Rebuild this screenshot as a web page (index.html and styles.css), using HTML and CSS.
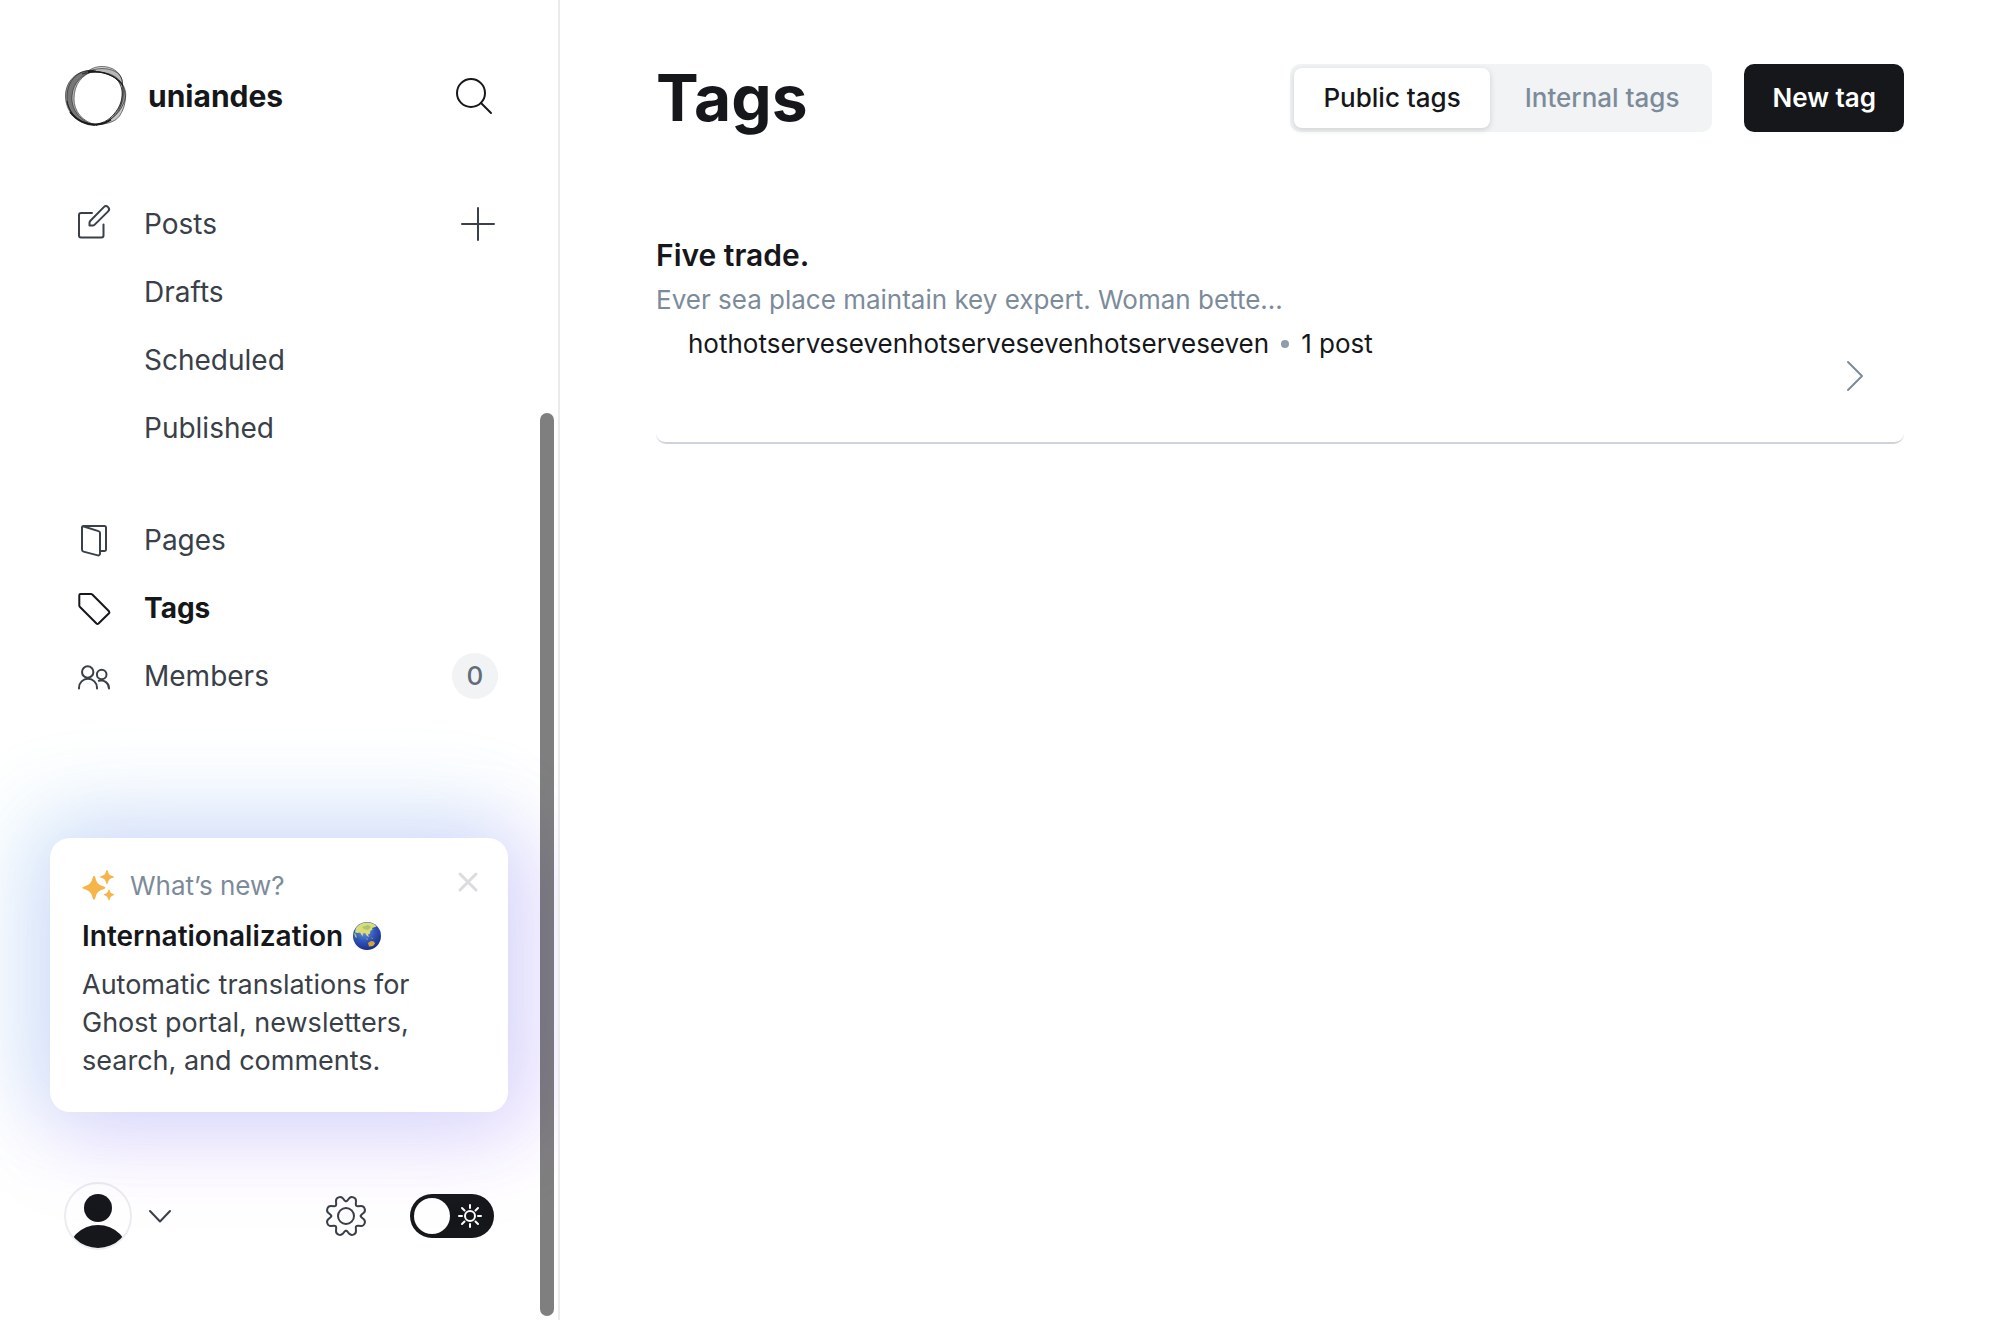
FILE: index.html
```html
<!DOCTYPE html>
<html lang="en">
<head>
<meta charset="utf-8">
<meta name="viewport" content="width=device-width, initial-scale=1">
<title>Tags</title>
<link rel="stylesheet" href="styles.css">
</head>
<body>
<div class="app">
  <aside class="sidebar">
    <div class="site">
      <svg class="site-logo" viewBox="0 0 64 64" aria-hidden="true">
        <g fill="#222" stroke="#222" stroke-width=".6" stroke-linejoin="round">
          <path fill-opacity=".45" d="M32 7C16 4 2 15 1.500 31 1 48 14 61 31 61.500 18 58 7 47 8 32 9 18 19 9 32 7z"/>
          <path fill-opacity=".3" d="M30 6.500C15 5 3 16 3 33c0 17 13 28 30 28C18 58 10 47 10 35 10 20 18 11 30 6.500z"/>
          <path fill-opacity=".2" d="M18 10c7-3 10-7 19-7.500 12-.5 22 7 21.500 18.500C54 12 46 9 36 8.500c-6-.3-12 0-18 1.500z"/>
          <path fill-opacity=".15" d="M24 7.500C32 4 44 3 52 8c5 3 7 8 6.500 14C53 13 44 9 34 8z"/>
          <path fill-opacity=".3" d="M58.300 20c4 6 4.500 13 1.500 19-3 7-7 12-13 16-5 4-10 6-15 6 12-2 20-8 24-17 3-8 3-16 2.500-24z"/>
          <path fill-opacity=".25" d="M58.500 21c2 8 1 16-3 22-5 8-9 16-24 18 9-1 19-2 24-9 6-9 8-20 3-31z"/>
        </g>
        <g fill="none" stroke="#1a1a1a" stroke-width=".9">
          <path d="M24 7.500c12-1 23 2 29 8 8 9 6 23-1 32-5 7-12 12-20 12.500C17 61 5 50 3 37"/>
          <path stroke-width="1.600" d="M6 48c6 8 16 13 26 12.500 6-.3 11-2 15-5"/>
          <path stroke-width="1.200" d="M24 8.500c9-2 18 .5 25 4 5 3 8 5 9.500 9"/>
        </g>
      </svg>
      <span class="site-name">uniandes</span>
      <button class="icon-button search" type="button" aria-label="Search">
        <svg width="36" height="36" viewBox="0 0 36 36"><circle cx="15" cy="15" r="14"/><path d="m25 25 10 10"/></svg>
      </button>
    </div>

    <nav class="nav" aria-label="Main">
      <ul class="nav-group">
        <li class="nav-row">
          <a class="nav-link" href="#posts">
            <svg class="nav-icon" viewBox="0 0 32 32"><path d="M14 5H3a2 2 0 0 0-2 2v20.500a2 2 0 0 0 2 2h20.500a2 2 0 0 0 2-2V16.500"/><path d="M11.500 17.500v-2.700a3 3 0 0 1 .9-2.100L25.800-.9a3 3 0 0 1 4.300 4.300L16.700 16.600a3 3 0 0 1-2.100.9z"/></svg>
            Posts
          </a>
          <button class="icon-button add" type="button" aria-label="New post">
            <svg width="34" height="34" viewBox="0 0 34 34"><path d="M17 1v32M1 17h32"/></svg>
          </button>
        </li>
        <li class="nav-row"><a class="nav-link nested" href="#drafts">Drafts</a></li>
        <li class="nav-row"><a class="nav-link nested" href="#scheduled">Scheduled</a></li>
        <li class="nav-row"><a class="nav-link nested" href="#published">Published</a></li>
      </ul>
      <ul class="nav-group">
        <li class="nav-row">
          <a class="nav-link" href="#pages">
            <svg class="nav-icon" viewBox="0 0 32 32"><path d="M22 27h4.500a1.500 1.500 0 0 0 1.500-1.500v-22A1.500 1.500 0 0 0 26.500 2H5.500A1.500 1.500 0 0 0 4 3.500v22.300a2 2 0 0 0 1.500 1.800l14.300 3.800a1.800 1.800 0 0 0 2.200-1.800V9a2 2 0 0 0-1.500-1.900L5 2.300"/></svg>
            Pages
          </a>
        </li>
        <li class="nav-row">
          <a class="nav-link active" href="#tags" aria-current="page">
            <svg class="nav-icon" viewBox="0 0 32 32"><path d="M2.500 2H13a2 2 0 0 1 1.300.5L31 19.300a1.500 1.500 0 0 1 0 2L20.500 31.500a1.500 1.500 0 0 1-2 0L2 15a2 2 0 0 1-.7-1.500V3.200A1.200 1.200 0 0 1 2.500 2z"/></svg>
            Tags
          </a>
        </li>
        <li class="nav-row">
          <a class="nav-link" href="#members">
            <svg class="nav-icon" viewBox="0 0 32 32"><circle cx="9.700" cy="12" r="5.700"/><path d="M1 28.500v-.8a9 9 0 0 1 18 0v.8"/><circle cx="23.700" cy="14.500" r="4.800"/><path d="M20.800 20.800c5.500-1.300 10.200 2.200 10.200 7.700"/></svg>
            Members
          </a>
          <span class="count">0</span>
        </li>
      </ul>
    </nav>

    <section class="news" aria-label="What’s new">
      <div class="news-label">
        <svg width="32" height="32" viewBox="0 0 32 32" fill="#f5b54a" aria-hidden="true"><path d="M12 6c.8 0 1 .7 1.300 1.600 1.400 5.300 2.700 7.200 8.500 9 .9.300 1.500.5 1.500 1.100s-.6.900-1.500 1.200c-5.600 1.800-7.100 3.700-8.500 9-.3.900-.5 1.600-1.300 1.600s-1-.7-1.300-1.600c-1.400-5.300-2.900-7.200-8.500-9-.9-.3-1.700-.5-1.700-1.200s.8-.8 1.700-1.100c5.600-1.800 7.100-3.700 8.500-9C11 6.700 11.200 6 12 6zM25 0c.4 0 .6.300.8.9.9 3.300 1.700 4 5 5.200.6.200 1 .4 1 .8s-.4.600-1 .8c-3.300 1.200-4.100 2-5 5.300-.2.600-.4.900-.8.900s-.6-.3-.8-.9c-.9-3.300-1.700-4.100-5-5.300-.6-.2-1-.4-1-.8s.4-.6 1-.8c3.300-1.200 4.100-1.900 5-5.200.2-.6.400-.9.800-.9zM27 19.500c.4 0 .5.300.7.700.7 2.300 1.400 3 3.700 3.800.4.100.7.300.7.600s-.3.500-.7.700c-2.300.9-3 1.700-3.700 4.200-.2.500-.3.800-.7.800s-.5-.3-.7-.8c-.7-2.500-1.400-3.300-3.700-4.200-.4-.2-.7-.4-.7-.7s.3-.5.7-.6c2.300-.8 3-1.500 3.700-3.800.2-.4.300-.7.700-.7z"/></svg>
        What’s new?
      </div>
      <h2 class="news-title">Internationalization
        <svg width="28" height="28" viewBox="0 0 28 28" role="img" aria-label="Globe">
          <defs><radialGradient id="sea" cx=".4" cy=".3" r=".75"><stop offset="0" stop-color="#6f9fdd"/><stop offset=".5" stop-color="#3157bd"/><stop offset="1" stop-color="#182a80"/></radialGradient></defs>
          <circle cx="14" cy="14" r="14" fill="url(#sea)"/>
          <path fill="#d9dc78" d="M3 6C6 2 10 .5 15 .6c4 .2 7 1.800 8.500 4L19 6l.5 2-2 .5-.5 3-2 1 1 2.500-2-1-2-3-2 .5-.5 3-2.500-4L5 11l-3-.5z"/>
          <path fill="#a9c66a" d="m9 5 6-2 3 2-3 3-4-1zM1 11l2 1 1 4-2-1z"/>
          <path fill="#d2a43a" d="m15 21 3-2 3 .5 1 2-2 2.500-4 .5z"/>
          <path fill="#9fb76a" d="m13 16 2 1-1 1zM18 15l2 1.500-1 .5z"/>
        </svg>
      </h2>
      <p class="news-text">Automatic translations for Ghost portal, newsletters, search, and comments.</p>
      <button class="icon-button close" type="button" aria-label="Dismiss">
        <svg width="20" height="20" viewBox="0 0 20 20"><path d="m2 2 16 16M18 2 2 18"/></svg>
      </button>
    </section>

    <div class="tools">
      <button class="account" type="button" aria-label="Account">
        <svg width="68" height="68" viewBox="0 0 68 68"><clipPath id="face"><circle cx="34" cy="34" r="32"/></clipPath><circle cx="34" cy="34" r="33" fill="#fff" stroke="#ebedef" stroke-width="2"/><g fill="#15171a" clip-path="url(#face)"><circle cx="34" cy="26" r="14"/><circle cx="34" cy="74" r="31"/></g></svg>
        <svg class="caret" width="24" height="14" viewBox="0 0 24 14"><path d="m2 2 10 10.500L22 2"/></svg>
      </button>
      <button class="icon-button settings" type="button" aria-label="Settings">
        <svg width="40" height="40" viewBox="0 0 40 40">
          <defs><path id="cog" d="M20 5.300q.7 0 1.300-.7L23.300 2.200Q25 .4 27.500 1.400 30.100 2.400 30 5l-.2 3q-.1 2.300 2.200 2.200l3-.2q2.600-.1 3.600 2.500 1 2.500-.8 4.200l-2.400 2q-.7.600-.7 1.300"/></defs>
          <use href="#cog"/><use href="#cog" transform="rotate(90 20 20)"/><use href="#cog" transform="rotate(180 20 20)"/><use href="#cog" transform="rotate(270 20 20)"/>
          <circle cx="20" cy="20" r="8"/>
        </svg>
      </button>
      <label class="theme">
        <input class="theme-input" type="checkbox" aria-label="Dark mode">
        <svg width="24" height="24" viewBox="0 0 24 24"><circle cx="12" cy="12" r="5"/><path d="M12 1v3M12 20v3M1 12h3M20 12h3M4 4l2.500 2.500M17.500 17.500 20 20M4 20l2.500-2.500M17.500 6.500 20 4"/></svg>
      </label>
    </div>
    <div class="scroll-thumb"></div>
  </aside>

  <main class="main">
    <header class="header">
      <h1 class="title">Tags</h1>
      <div class="segments">
        <button class="segment selected" type="button" aria-pressed="true">Public tags</button>
        <button class="segment" type="button" aria-pressed="false">Internal tags</button>
      </div>
      <button class="primary" type="button">New tag</button>
    </header>
    <ul class="tags">
      <li>
        <a class="tag" href="#five-trade">
          <div class="tag-info">
            <h2 class="tag-name">Five trade.</h2>
            <p class="tag-text">Ever sea place maintain key expert. Woman bette...</p>
            <p class="tag-meta"><span>hothotservesevenhotservesevenhotserveseven</span><span class="dot"></span><span>1 post</span></p>
          </div>
          <svg class="tag-arrow" width="18" height="32" viewBox="0 0 18 32"><path d="m2 2 14 14L2 30"/></svg>
        </a>
      </li>
    </ul>
  </main>
</div>
</body>
</html>
```
FILE: styles.css
```css
* { box-sizing: border-box; }
body {
  margin: 0;
  background: #fff;
  color: #15171a;
  font: 400 28px/36px Inter, "Liberation Sans", sans-serif;
}
h1, h2, p, ul { margin: 0; padding: 0; }
ul { list-style: none; }
a { color: inherit; text-decoration: none; }
button {
  margin: 0;
  padding: 0;
  border: 0;
  background: none;
  color: inherit;
  font: inherit;
  cursor: pointer;
}
svg { display: block; flex: none; overflow: visible; }

.app { display: flex; min-height: 100vh; }

/* Sidebar */
.sidebar {
  position: relative;
  display: flex;
  flex-direction: column;
  flex: none;
  width: 560px;
  padding: 64px 50px 70px;
  border-right: 2px solid #ebebeb;
  overflow: hidden;
}
.icon-button svg, .nav-icon, .caret, .tag-arrow, .theme svg {
  fill: none;
  stroke: currentColor;
  stroke-width: 2;
  stroke-linecap: round;
  stroke-linejoin: round;
}
.site { display: flex; align-items: center; height: 64px; padding: 0 16px 0 14px; }
.site-logo { width: 64px; height: 64px; }
.site-name { flex: 1; padding-left: 20px; font-size: 30px; font-weight: 700; }

.nav { flex: 1; padding-top: 62px; color: #394047; }
.nav-group + .nav-group { margin-top: 44px; }
.nav-row { display: flex; align-items: center; height: 68px; padding: 0 10px 0 28px; }
.nav-link { display: flex; align-items: center; flex: 1; gap: 34px; }
.nav-icon { width: 32px; height: 32px; }
.nested { padding-left: 66px; }
.active { color: #15171a; font-weight: 700; }
.add { margin-right: 3px; }
.count {
  min-width: 46px;
  border-radius: 23px;
  background: #f1f3f4;
  color: #626d79;
  font-size: 26px;
  font-weight: 500;
  line-height: 46px;
  text-align: center;
}

.news {
  position: relative;
  padding: 30px 32px 32px;
  border-radius: 20px;
  background: #fff;
  box-shadow:
    -14px -12px 84px 16px rgba(75, 200, 226, .2),
    14px 12px 84px 16px rgba(190, 110, 255, .26);
}
.news-label { display: flex; align-items: center; gap: 16px; color: #7c8b9a; font-size: 26px; }
.news-title { display: flex; align-items: center; gap: 10px; margin: 14px 0 12px; font-size: 28px; font-weight: 600; line-height: 36px; }
.news-text { color: #394047; font-size: 27px; line-height: 38px; }
.close { position: absolute; top: 34px; right: 30px; color: #dadcde; }
.close svg { stroke-width: 3; }

.tools { display: flex; align-items: center; margin-top: 70px; padding: 0 14px; color: #394047; }
.account { display: flex; align-items: center; gap: 16px; margin-right: auto; }
.settings { margin-right: 44px; }
.theme {
  display: flex;
  align-items: center;
  gap: 8px;
  width: 84px;
  height: 44px;
  padding-left: 4px;
  border-radius: 22px;
  background: #15171a;
  color: #fff;
}
.theme-input { appearance: none; flex: none; width: 36px; height: 36px; margin: 0; border-radius: 50%; background: #fff; }
.scroll-thumb {
  position: absolute;
  top: 413px;
  right: 4px;
  bottom: 4px;
  width: 14px;
  border-radius: 7px;
  background: rgba(0, 0, 0, .5);
}

/* Tag list */
.main { flex: 1; min-width: 0; padding: 64px 96px; }
.header { display: flex; align-items: center; height: 68px; }
.title { flex: 1; font-size: 64px; font-weight: 700; line-height: 68px; }
.segments { display: flex; gap: 6px; margin-right: 32px; padding: 4px; border-radius: 10px; background: #f1f3f4; }
.segment { height: 60px; padding: 0 29px; border-radius: 8px; color: #7c8b9a; font-size: 26px; font-weight: 500; }
.selected { background: #fff; color: #15171a; box-shadow: 0 2px 6px rgba(0, 0, 0, .15); }
.primary { height: 68px; padding: 0 28px; border-radius: 10px; background: #15171a; color: #fff; font-size: 26px; font-weight: 600; }

.tags { margin-top: 100px; }
.tag {
  display: flex;
  align-items: flex-end;
  justify-content: space-between;
  padding: 0 40px 50px 0;
  border-bottom: 2px solid #ced4d9;
  border-radius: 10px;
}
.tag-info { padding-bottom: 26px; }
.tag-name { font-size: 30px; font-weight: 600; line-height: 46px; }
.tag-text { color: #7c8b9a; font-size: 26px; line-height: 44px; }
.tag-meta { display: flex; align-items: center; gap: 12px; padding-left: 32px; font-size: 26px; line-height: 44px; }
.dot { width: 8px; height: 8px; border-radius: 50%; background: #8e9cac; }
.tag-arrow { color: #7c8b9a; }
```
